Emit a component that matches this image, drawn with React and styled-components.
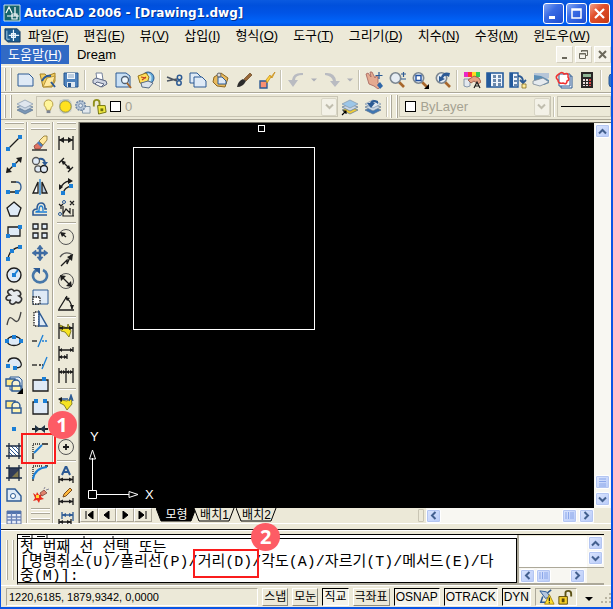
import React from "react";
import styled, { createGlobalStyle, css } from "styled-components";

const GlobalStyle = createGlobalStyle`
  * { box-sizing: border-box; }
  body {
    margin: 0;
    font-family: "Liberation Sans", "Noto Sans CJK KR", sans-serif;
    font-size: 13px;
    color: #000;
  }
  button, select {
    font: inherit;
    color: inherit;
    margin: 0;
    padding: 0;
    border: 0;
    background: none;
  }
`;

const INK = "#1c1c1c";
const BLUE = "#1b7fd6";
const NAVY = "#2c5a94";
const PALE = "#dfeaf6";

const Window = styled.div`
  display: flex;
  flex-direction: column;
  height: 100vh;
  background: #ece9d8;
  border: solid #0a55e5;
  border-width: 0 2px 2px 1px;
  overflow: hidden;
`;

const TitleBar = styled.header`
  display: flex;
  align-items: center;
  flex: none;
  height: 26px;
  padding: 0 1px 0 2px;
  background: linear-gradient(#0a5ae0, #0050dc 20%, #0054e6 50%, #0064fa 85%, #0052e0);
`;

const Title = styled.h1`
  flex: 1;
  margin: 0 0 0 3px;
  font-family: "DejaVu Sans", sans-serif;
  font-size: 12px;
  line-height: 24px;
  font-weight: bold;
  color: #fff;
  text-shadow: 1px 1px #003090;
  white-space: nowrap;
`;

const CaptionButton = styled.button`
  width: 21px;
  height: 21px;
  margin-left: 2px;
  border: 1px solid #fff;
  border-radius: 3px;
  background: ${(p) =>
    p.$close
      ? "linear-gradient(135deg, #f0a088, #e2502c 40%, #c63a14)"
      : "linear-gradient(135deg, #86a8f4, #3a6ce4 40%, #1c4cd0)"};
  svg { display: block; margin: auto; }
`;

const Menus = styled.div`
  flex: none;
  margin-bottom: 2px;
`;

const MenuRow = styled.nav`
  display: flex;
  align-items: center;
  gap: 1px;
  height: 19px;
  line-height: 19px;
  white-space: nowrap;
`;

const MenuIcon = styled.span`
  width: 19px;
  height: 19px;
  padding-left: 3px;
`;

const MenuItem = styled.button`
  height: 19px;
  padding: 0 7px;
  line-height: 19px;
  ${(p) => p.$active && css`
    color: #fff;
    background: #316ac5;
  `}
`;

const ChildButtons = styled.div`
  display: flex;
  gap: 2px;
  margin-left: auto;
`;

const ChildButton = styled.button`
  width: 17px;
  height: 17px;
  background: #f5f3ea;
  border: 1px solid;
  border-color: #fff #d4d0c0 #d4d0c0 #fff;
  svg { display: block; margin: auto; }
`;

const ToolRow = styled.div`
  display: flex;
  align-items: center;
  flex: none;
  height: 27px;
  padding-left: 3px;
  border-top: 1px solid #fff;
  border-bottom: 1px solid #aca899;
  overflow: hidden;
`;

const Grip = styled.span`
  flex: none;
  ${(p) => p.$across ? css`
    width: 19px;
    height: 7px;
    margin: 1px auto 2px;
    border-top: 1px solid #aca899;
    border-bottom: 1px solid #aca899;
    box-shadow: 0 -1px #fff, inset 0 2px #ece9d8, inset 0 -1px #fff;
  ` : css`
    width: 7px;
    height: ${p.$tall ? "40px" : "23px"};
    margin: 0 1px 0 1px;
    border-left: 1px solid #aca899;
    border-right: 1px solid #aca899;
    box-shadow: -1px 0 #fff, inset 2px 0 #ece9d8, inset -1px 0 #fff;
  `}
`;

const ToolButton = styled.button`
  position: relative;
  flex: none;
  display: flex;
  align-items: center;
  justify-content: center;
  width: ${(p) => (p.$narrow ? "13px" : "23px")};
  height: 22px;
  svg { display: block; }
`;

const Divider = styled.span`
  flex: none;
  ${(p) => p.$across ? css`
    height: 2px;
    width: 19px;
    margin: 2px auto;
    border-top: 1px solid #aca899;
    border-bottom: 1px solid #fff;
  ` : css`
    width: 2px;
    height: 20px;
    margin: 0 2px;
    border-left: 1px solid #c5c2b2;
    border-right: 1px solid #fff;
  `}
`;

const Combo = styled.div`
  display: flex;
  align-items: center;
  height: 21px;
  flex: ${(p) => p.$basis};
  min-width: 0;
  padding-left: 3px;
  border: 1px solid #c9c5b4;
  color: #a5a292;
  overflow: hidden;
`;

const ComboIcon = styled.span`
  flex: none;
  width: 17px;
  height: 18px;
`;

const Swatch = styled.span`
  flex: none;
  width: 11px;
  height: 11px;
  margin: 0 4px 0 2px;
  border: 1px solid #000;
  background: #fff;
`;

const Select = styled.select`
  appearance: none;
  flex: 1;
  min-width: 0;
  height: 18px;
  line-height: 18px;
  outline: 0;
`;

const Arrow = styled.span`
  flex: none;
  display: flex;
  align-items: center;
  justify-content: center;
  width: 16px;
  height: 18px;
  border: 1px solid #d8d5c5;
  border-radius: 2px;
  background: #f3f1e7;
`;

const LineSample = styled.span`
  flex: 1;
  border-top: 1px solid #000;
`;

const Main = styled.main`
  display: flex;
  flex: 1;
  min-height: 0;
  margin-top: 2px;
`;

const Tools = styled.div`
  display: flex;
  flex: none;
  overflow: hidden;
`;

const ToolColumn = styled.div`
  display: flex;
  flex-direction: column;
  align-items: center;
  width: 26px;
  padding-left: 1px;
  border-right: 1px solid #aca899;
  box-shadow: 1px 0 #fff;
`;

const Workspace = styled.section`
  display: flex;
  flex-direction: column;
  flex: 1;
  min-width: 0;
  border-left: 1px solid #716f64;
  border-top: 1px solid #716f64;
`;

const View = styled.div`
  display: flex;
  flex: 1;
  min-height: 0;
`;

const Canvas = styled.div`
  position: relative;
  flex: 1;
  background: #000;
  overflow: hidden;
`;

const Square = styled.div`
  position: absolute;
  left: 53px;
  top: 24px;
  width: 182px;
  height: 183px;
  border: 1px solid #fff;
`;

const PickBox = styled.div`
  position: absolute;
  left: 178px;
  top: 2px;
  width: 7px;
  height: 7px;
  border: 1px solid #fff;
`;

const Ucs = styled.svg`
  position: absolute;
  left: 4px;
  bottom: 4px;
`;

const Scroll = styled.div`
  display: flex;
  flex-direction: ${(p) => (p.$vertical ? "column" : "row")};
  align-items: center;
  flex: none;
  width: ${(p) => (p.$vertical ? "17px" : p.$width)};
  ${(p) => !p.$vertical && "height: 15px;"}
  background: #f8f7f2;
`;

const ScrollButton = styled.button`
  flex: none;
  display: flex;
  align-items: center;
  justify-content: center;
  width: 15px;
  height: 14px;
  margin: ${(p) => p.$margin || "0"};
  border: 1px solid #fff;
  border-radius: 2px;
  background: linear-gradient(135deg, #dbe5fe, #b8cbf8);
  box-shadow: inset 0 0 0 1px #b4c6f2;
`;

const SheetBar = styled.div`
  display: flex;
  align-items: flex-start;
  flex: none;
  height: 16px;
`;

const SheetNav = styled.button`
  display: flex;
  align-items: center;
  justify-content: center;
  width: 18px;
  height: 14px;
  border: 1px solid;
  border-color: #fff #aca899 #aca899 #fff;
`;

const SheetTabs = styled.div`
  display: flex;
  flex: 1;
  margin-left: 4px;
`;

const SheetTab = styled.button`
  position: relative;
  flex: none;
  width: 41px;
  height: 14px;
  line-height: 12px;
  font-size: 12px;
  margin-right: ${(p) => (p.$active ? "-3px" : "1px")};
  color: ${(p) => (p.$active ? "#fff" : "#000")};
  svg { position: absolute; left: 0; top: 0; }
  span { position: relative; }
`;

const Splitter = styled.span`
  width: 6px;
  height: 13px;
  margin: 1px 2px 0 0;
  border: 1px solid #c9c5b4;
  border-radius: 1px;
`;

const Dock = styled.section`
  flex: none;
  display: flex;
  align-items: center;
  margin-top: 5px;
  padding: 4px 7px 0 5px;
  border-top: 1px solid #1c1c1c;
  box-shadow: 0 -5px #ece9d8, 0 -6px #fff, inset 0 1px #fff;
`;

const CommandWindow = styled.div`
  display: flex;
  flex: 1;
  min-width: 0;
  margin-left: 2px;
  background: #ece9d8;
  border-top: 1px solid #000;
  border-left: 1px solid #000;
  border-bottom: 2px solid #aca899;
`;

const Log = styled.div`
  flex: 1;
  min-width: 0;
  font-family: "Liberation Mono", "Noto Sans CJK KR", monospace;
  font-size: 15px;
  background: #fff;
  border-right: 2px solid #aca899;
`;

const History = styled.svg`
  display: block;
  width: 100%;
  height: 3px;
`;

const Prompt = styled.div`
  height: 45px;
  padding: 3px 0 0 2px;
  border: solid #000;
  border-width: 1px 1px 1px 0;
  white-space: nowrap;
`;

const PromptLine = styled.p`
  display: flex;
  align-items: center;
  height: 14px;
  margin: 0;
  line-height: 14px;
`;

const LogSide = styled.div`
  display: flex;
  flex-direction: column;
  flex: none;
  width: 85px;
  padding-top: 1px;
`;

const LogBlank = styled.div`
  display: flex;
  justify-content: flex-end;
  flex: 1;
  background: #fff;
  border-bottom: 1px solid #aca899;
`;

const Marked = styled.span`
  position: relative;
`;

const RedBox = styled.span`
  position: absolute;
  z-index: 2;
  inset: ${(p) => p.$inset};
  border: 2px solid #fa1c1c;
`;

const Badge = styled.b`
  position: absolute;
  z-index: 3;
  top: ${(p) => p.$top};
  right: ${(p) => p.$right};
  width: 29px;
  height: 28px;
  border-radius: 50%;
  background: #fd5c65;
  color: #fff;
  font-family: "Noto Sans", sans-serif;
  font-size: 20px;
  line-height: 27px;
  text-align: center;
`;

const StatusBar = styled.footer`
  display: flex;
  align-items: center;
  flex: none;
  gap: 4px;
  height: 22px;
  padding-left: 5px;
  border-top: 1px solid #fff;
  font-size: 12px;
`;

const Coords = styled.output`
  flex: 1;
  min-width: 0;
  height: 18px;
  padding-left: 2px;
  line-height: 16px;
  font-size: 11px;
  border: 1px solid;
  border-color: #aca899 #fff #fff #aca899;
  white-space: nowrap;
`;

const StatusButton = styled.button`
  flex: none;
  height: 18px;
  padding: 0 1px;
  line-height: 16px;
  border: 1px solid;
  border-color: ${(p) => (p.$on ? "#000 #fff #fff #000" : "#fff #8c897c #8c897c #fff")};
  background: ${(p) => (p.$on ? "#f5f3ea" : "#ece9d8")};
`;

const Tray = styled.div`
  display: flex;
  flex: none;
  gap: 2px;
  height: 18px;
  padding: 0 2px;
  border: 1px solid;
  border-color: #aca899 #fff #fff #aca899;
`;

const StatusMenu = styled.button`
  width: 16px;
  height: 18px;
  svg { display: block; margin: 4px auto 0; }
`;

const Pt = ({ x, y }) => <rect x={x} y={y} width="4" height="4" fill={BLUE} />;
const Ln = ({ d, c = INK, w = 1.3, f = "none", ...rest }) => (
  <path d={d} stroke={c} strokeWidth={w} fill={f} {...rest} />
);
const Page = ({ x, y, w, h }) => (
  <path d={`M${x} ${y}h${w - 4}l4 4v${h - 4}h-${w}z`} fill={PALE} stroke={NAVY} />
);
const Lens = ({ children }) => (
  <>
    <Ln d="M11 11l5 5" c="#a8672c" w={2.6} />
    <circle cx="7.5" cy="7" r="5.2" fill="#e6edf4" stroke="#7c8791" strokeWidth="1.6" />
    {children}
  </>
);
const Stack = ({ a, b }) => (
  <>
    <path d="M1 12l8-3 8 3-8 4z" fill={b} stroke="#59728f" strokeWidth=".7" />
    <path d="M1 9l8-3 8 3-8 4z" fill="#cbd7e4" stroke="#59728f" strokeWidth=".7" />
    <path d="M1 6l8-4 8 4-8 4z" fill={a} stroke="#8195aa" strokeWidth=".7" />
  </>
);
const HatchFrame = () => <Ln d="M4 1v16M14 1v16M1 4h16M1 14h16" c="#1c2c44" w={1.3} />;
const Squares = () => (
  <>
    <path d="M1 3h9v7H1z" fill="#ffe98a" stroke={NAVY} strokeWidth="1.4" />
    <circle cx="11" cy="8" r="4" fill="#f7f3d4" stroke={NAVY} strokeWidth="1.4" />
    <path d="M7 10h9v5H7z" fill="#fff4b0" stroke={NAVY} strokeWidth="1.4" />
  </>
);

const icons = {
  // standard toolbar
  new: <Page x={2} y={3} w={15} h={12} />,
  open: (
    <>
      <path d="M1 3l5 0 2 2 8-3v8l-3 6H4z" fill="#f3cf62" stroke="#a58226" />
      <path d="M4 16l4-9 8-2-3 10z" fill="#ffe9a0" stroke="#b8963a" />
      <Ln d="M3 10q3-6 9-5M12 11l4 5" c={NAVY} w={2} />
    </>
  ),
  save: (
    <>
      <path d="M2 2h14v14H4l-2-2z" fill="#4f83bd" stroke="#25558e" />
      <path d="M5 2h8v6H5z" fill="#f2f6fa" />
      <Ln d="M6 4h6M6 6h6" c="#86a5c5" w={1} />
      <path d="M5 11h8v5H5z" fill="#dfe8f1" /><path d="M6 12h3v4H6z" fill="#25558e" />
    </>
  ),
  print: (
    <>
      <path d="M5 2h6l1 7H6z" fill="#fff" stroke="#75829b" />
      <path d="M2 9l3-2 10 3 1 3-5 3-9-4z" fill="#cfd5e2" stroke="#5d6883" />
      <path d="M6 11l7 2-3 3-6-3z" fill="#f4f6fa" stroke="#5d6883" />
    </>
  ),
  preview: (
    <>
      <path d="M2 2h10l4 3v11H2z" fill="#c9e0f5" stroke={NAVY} />
      <circle cx="11" cy="9" r="3.5" fill="#eef6fc" stroke="#4e6075" strokeWidth="1.3" />
      <Ln d="M13 12l4 5" c="#a8672c" w={2} />
    </>
  ),
  publish: (
    <>
      <circle cx="11" cy="7" r="6" fill="#62a8d4" stroke={NAVY} />
      <path d="M11 2q5 2 3 8l-4 2z" fill="#c9e4f2" />
      <path d="M1 5l8-3 3 4-2 7-7-1z" fill="#ffdf5b" stroke="#96741a" />
      <Ln d="M4 6l5 1M5 9l4-3" c="#c23c20" w={1.2} />
      <path d="M4 12l7-2 5 2-4 5-7-1z" fill="#dbe3ed" stroke="#586c86" />
    </>
  ),
  cut: (
    <>
      <Ln d="M1 6l10 4M1 10l10-2" c="#4b5563" w={1.6} />
      <circle cx="13.5" cy="6.5" r="2.2" fill="none" stroke={NAVY} strokeWidth="1.5" />
      <circle cx="13" cy="12" r="2.2" fill="none" stroke={NAVY} strokeWidth="1.5" />
    </>
  ),
  copy: <><Page x={1} y={2} w={11} h={10} /><Page x={5} y={6} w={12} h={10} /></>,
  paste: (
    <>
      <path d="M2 6l7-4 7 5-3 9-8-1-4-4z" fill="#e8b95c" stroke="#8d6822" />
      <Page x={6} y={6} w={8} h={7} />
      <circle cx="7" cy="4" r="2" fill="#ddd" stroke="#666" />
    </>
  ),
  brush: (
    <>
      <path d="M9 8l6-6 2 2-6 6z" fill="#996838" stroke="#553513" strokeWidth=".6" />
      <path d="M2 16q1-6 6-8l3 2q-3 6-9 6z" fill="#2b2b2b" />
    </>
  ),
  blockEdit: (
    <>
      <path d="M2 10h7v7H2z" fill="#fa8f72" stroke={NAVY} strokeWidth="1.4" />
      <path d="M8 9l4-5 1 2 4-5-3 6-1-1-4 6z" fill="#ffd43a" stroke="#c4891c" strokeWidth=".8" />
    </>
  ),
  pan: (
    <>
      <path d="M1 3l2-1 3 4-1-5 2 0 3 6 1-2 2 1v6l3 3-3 3-4-3-5-2z" fill="#e4aa90" stroke="#a3615a" strokeWidth=".8" />
      <path d="M12 14l3-3 3 4-3 3z" fill="#2f67a8" />
      <Ln d="M14 1v7M10.500 4.500h7" c={NAVY} w={1.2} />
    </>
  ),
  zoomRt: <Lens><Ln d="M13 3h5M15.500 1v5M13 8h5" c={NAVY} w={1.2} /></Lens>,
  zoomWin: (
    <Lens>
      <path d="M5 4.500h5v5H5z" fill="#fff" stroke="#1f4fa0" strokeWidth="1.4" />
      <path d="M18 13v5h-5z" fill="#000" />
    </Lens>
  ),
  zoomPrev: <Lens><path d="M16 2q-7-2-9 4l-2-1 0 6 6-3-2-1q2-4 6-1z" fill={NAVY} /></Lens>,
  props: (
    <>
      <path d="M1 1h4v5H1z" fill="#e928c6" /><path d="M5 1h4v5H5z" fill="#f33" />
      <path d="M9 1h4v5H9z" fill="#fd2" /><path d="M13 1h4v5h-4z" fill="#3c5" />
      <path d="M1 8h6v7q-3 2-6 0z" fill="#e3e8ee" stroke="#70839a" strokeWidth=".8" />
      <path d="M5 9l6-4 5 2 2 4-3 2-4-3-3 2z" fill="#e4a183" stroke="#914c3c" strokeWidth=".8" />
      <Ln d="M11 17l3-6 3 6M12 15h4" w={1.2} />
    </>
  ),
  designCenter: (
    <>
      <path d="M1 2h16v14H1z" fill="#eef4fb" stroke="#235a9c" strokeWidth="1.6" />
      <path d="M1 2h4v14H1z" fill="#235a9c" />
      <path d="M7 4h3v3H7zM12 4h3v3h-3zM7 8h3v3H7zM12 8h3v3h-3zM7 12h3v3H7zM12 12h3v3h-3z" fill="#6a88ab" />
    </>
  ),
  toolPalette: (
    <>
      <path d="M1 2h8v14H1z" fill="#eef4fb" stroke="#235a9c" strokeWidth="1.4" />
      <path d="M1 2h3v14H1z" fill="#235a9c" />
      <path d="M5 5h3v2H5zM5 9h3v2H5zM5 13h3v2H5z" fill="#6a88ab" />
      <Ln d="M9 5q5 0 5 6M11 9l3 3 3-3" c={NAVY} w={1.8} />
      <path d="M13 13h4v4h-4z" fill="#ffec9c" stroke="#876d21" strokeWidth=".8" />
    </>
  ),
  sheetSet: (
    <>
      <path d="M2 2h15v5l-8 4-7-2z" fill="#b6c6d8" />
      <path d="M2 4l7 1 8 4v3l-5 2-10-5z" fill="#5c8fb6" />
      <path d="M1 10l10-3 6 4-9 4-7-2z" fill="#e6ebef" stroke="#778795" strokeWidth=".8" />
    </>
  ),
  markup: (
    <>
      <path d="M6 5h11v12H6z" fill="#eef2f8" stroke={NAVY} />
      <path d="M4 3h11v12H4z" fill="#fff" stroke={NAVY} />
      <Ln d="M4 3q3-3 5 0 5-2 4 3 2 3-1 4 0 4-4 2-5 1-5-3-4-3 1-6z" c="#f03232" w={1.6} />
    </>
  ),
  calc: (
    <>
      <path d="M3 1h12v16H3z" fill="#292626" />
      <path d="M5 3h8v3H5z" fill="#8fb594" />
      <path d="M5 8h2v2H5zM8 8h2v2H8zM5 11h2v2H5zM8 11h2v2H8zM5 14h2v1H5zM8 14h2v1H8z" fill="#e8dcdc" />
      <path d="M11 8h2v2h-2zM11 11h2v2h-2zM11 14h2v1h-2z" fill="#e04848" />
    </>
  ),
  help: <rect x="2" y="3" width="14" height="13" rx="3" fill="#3472c4" stroke={NAVY} />,
  redo: <path d="M2 2q10-1 11 8h4l-5 6-5-6h3Q9 5 2 4z" fill="#b9bbc1" />,
  back: <path d="M16 2Q6 1 5 9H1l5 7 5-7H8q0-5 8-5z" fill="#b9bbc1" />,
  // layers
  layers: <Stack a="#dfe6ee" b="#7b98b8" />,
  layerCurrent: (
    <><Stack a="#9cc6e8" b="#f0cc38" /><Ln d="M1 17l4-4M2 13h3v3" c="#000" w={1.1} /></>
  ),
  layerPrev: <><Stack a="#dfe6ee" b="#3f77b4" /><path d="M14 3Q8 0 6 5H3l4 5 4-5H9q2-2 5 1z" fill={NAVY} /></>,
  bulb: (
    <>
      <path d="M9 2a4.500 4.500 0 0 1 3 8l-1 3H7l-1-3a4.500 4.500 0 0 1 3-8z" fill="#fff59a" stroke="#b59b42" />
      <path d="M7 13h4v3H7z" fill="#7d8492" />
    </>
  ),
  sun: (
    <>
      <path d="M3 2h2l2-1h5l3 3 1 5-1 5-3 2-5 1-4-3-1-5z" fill="#b0bcc0" opacity=".7" />
      <circle cx="9" cy="9" r="6" fill="#ffe21f" stroke="#94904a" />
    </>
  ),
  freeze: (
    <>
      <path d="M9 9h8v7H9z" fill="#e3e9ee" stroke="#8195a5" />
      <circle cx="7" cy="8" r="5" fill="#b5c5d6" stroke="#7188a5" strokeWidth="1.6" strokeDasharray="2 1" />
      <circle cx="7" cy="8" r="2" fill="#e4ebf2" stroke="#7188a5" />
    </>
  ),
  lock: (
    <>
      <Ln d="M3 9V5q0-3 3-3t3 3v5" c="#90901c" w={2} />
      <path d="M7 8h8l1 7-8 2z" fill="#f0e840" stroke="#6f7010" />
      <path d="M10 11h3v3h-3z" fill="#6f7010" />
    </>
  ),
  // draw
  line: <><Ln d="M3 15L15 3" /><Pt x={1} y={13} /><Pt x={13} y={1} /></>,
  xline: (
    <>
      <Ln d="M2 16L16 2" />
      <path d="M1 17l1-6 5 5zM17 1l-6 1 5 5z" fill={INK} />
      <Pt x={7} y={7} />
    </>
  ),
  pline: (
    <>
      <Ln d="M6 4h5M4 14h7" /><Ln d="M11 4q5 0 5 5t-5 5" c={NAVY} />
      <Pt x={1} y={12} /><Pt x={10} y={12} />
    </>
  ),
  polygon: <Ln d="M9 2l7 6-3 8H5L2 8z" f={PALE} />,
  rect: <><Ln d="M3 5h12v9H3z" f={PALE} /><Pt x={1} y={12} /><Pt x={13} y={3} /></>,
  arc: <><Ln d="M3 15Q4 5 15 3" /><Pt x={1} y={13} /><Pt x={5} y={5} /><Pt x={13} y={1} /></>,
  circle: (
    <><circle cx="9" cy="9" r="7" fill={PALE} stroke={INK} strokeWidth="1.4" /><Ln d="M9 9l4-5" c={BLUE} w={2} /><Pt x={7} y={7} /></>
  ),
  cloud: (
    <Ln d="M5 7Q1 4 4 2q3-2 5 1 4-2 6 1 2 3-1 4 4 2 2 5-2 3-5 1-3 4-6 1-1-2 1-3-5 1-5-2 1-3 4-3z" f="#e6eaee" c="#333" w={1.6} />
  ),
  spline: <Ln d="M2 15C4 5 6 7 9 10s5 2 7-8" c="#444" />,
  ellipse: (
    <><ellipse cx="9" cy="9" rx="7" ry="4.500" fill={PALE} stroke={INK} strokeWidth="1.3" /><Pt x={0} y={7} /><Pt x={7} y={3} /><Pt x={14} y={7} /></>
  ),
  ellipseArc: (
    <><Ln d="M3 8q1-4 6-4t7 5-6 5" f={PALE} /><Pt x={1} y={10} /><Pt x={8} y={12} /></>
  ),
  insert: <><path d="M5 1h9l3 3v10H5z" fill={PALE} stroke={NAVY} /><Squares /><path d="M18 12v6h-6z" /></>,
  block: <Squares />,
  point: <Pt x={7} y={7} />,
  hatch: (
    <><path d="M4 4h10v10H4z" fill="#fff" /><Ln d="M4 10l4 4M4 6l8 8M6 4l8 8M10 4l4 4" c={NAVY} w={1} /><HatchFrame /></>
  ),
  gradient: (
    <><path d="M4 4h10v10H4z" fill="#303c58" /><path d="M14 6v8H6z" fill="#80784c" /><HatchFrame /></>
  ),
  region: (
    <><path d="M2 3h8l6 7v5H2z" fill={PALE} stroke={NAVY} strokeWidth="1.4" /><circle cx="8" cy="10" r="2.500" fill="#fff" stroke={NAVY} /></>
  ),
  table: (
    <>
      <path d="M2 3h14v13H2z" fill="#e8eefa" stroke="#6276a4" />
      <path d="M2 3h14v3H2z" fill="#5274ae" />
      <Ln d="M2 9h14M2 12h14M6.500 5v11M11.500 5v11" c="#6a83b8" />
    </>
  ),
  // modify
  erase: (
    <>
      <path d="M3 12l5-4 4 3-3 4H4z" fill="#e07564" stroke="#8c3c34" strokeWidth=".8" />
      <path d="M6 9l2-2 4 4-2 2z" fill="#4b7fbe" />
      <path d="M8 7l5-5h3v4l-4 5z" fill="#ffe89c" stroke="#8a7128" strokeWidth=".8" />
      <Ln d="M1 16h15" />
    </>
  ),
  copyObj: (
    <>
      <circle cx="5" cy="5" r="3.500" fill={PALE} stroke="#555" strokeWidth="1.3" />
      <circle cx="7" cy="13" r="3.200" fill={PALE} stroke="#555" strokeWidth="1.3" />
      <circle cx="13" cy="13" r="3.500" fill={PALE} stroke={INK} strokeWidth="1.3" />
      <Ln d="M8 3q5-1 6 4" c={NAVY} w={2} /><path d="M11 6h6l-3 4z" fill={NAVY} />
    </>
  ),
  mirror: <><Ln d="M7 4v11H2z" f="#fff" /><Ln d="M11 4v11h5z" f="#b9cbdc" /><Ln d="M9 1v16" c={BLUE} /></>,
  offset: (
    <>
      <Ln d="M16 15H2v-4q1-2 4-2 0-6 4-6t4 5v1h2" c={NAVY} w={1.6} />
      <Ln d="M16 12H6h-1q0-1 3-1 0-5 2-5t2 4v1" c={BLUE} />
    </>
  ),
  array: <Ln d="M2 2h5v5H2zM11 2h5v5h-5zM2 11h5v5H2zM11 11h5v5h-5z" f={PALE} />,
  move: (
    <path d="M9 1l3 4h-2v3h3V6l4 3-4 3v-2h-3v3h2l-3 4-3-4h2v-3H5v2L1 9l4-3v2h3V5H6z" fill="#3f6ea5" stroke={NAVY} strokeWidth=".5" />
  ),
  rotate: <><Ln d="M6 4a7 6.500 0 1 0 6 0" c="#4677a9" w={2.6} /><path d="M2 2h7v6z" fill={NAVY} /></>,
  scale: (
    <><path d="M2 2h15v14H2z" fill={PALE} stroke={NAVY} /><Ln d="M2 9h7v7H2z" f="#fff" strokeDasharray="1.500 1" /></>
  ),
  stretch: (
    <><Ln d="M8 2h-5v14h5z" f="#fff" strokeDasharray="1.500 1" /><path d="M8 2l8 14H8z" fill={PALE} stroke={NAVY} strokeWidth="1.5" /></>
  ),
  trim: <><Ln d="M1 9h5" /><Ln d="M7 15l5-12" c={BLUE} /><Ln d="M11 9h6" c={BLUE} strokeDasharray="2 1" /></>,
  extend: <><Ln d="M1 11h5" /><Ln d="M8 11h4" c={INK} strokeDasharray="2 1" /><Ln d="M11 15l5-12" c={BLUE} /></>,
  breakPt: <><Ln d="M2 4h15v11H2z" f={PALE} /><Pt x={11} y={1} /></>,
  break: <><Ln d="M5 4H2v12h15V4h-3" f={PALE} /><Pt x={3} y={1} /><Pt x={12} y={1} /></>,
  join: <><Ln d="M1 9h16" w={2} /><path d="M4 5l5 4-5 4zM14 5l-5 4 5 4z" fill="#234" /></>,
  chamfer: <><Ln d="M2 17v-6M11 2h6" /><Ln d="M2 10V2h8" strokeDasharray="1 1" /><Ln d="M3 11l8-8" c={BLUE} w={1.8} /></>,
  fillet: <><Ln d="M2 17v-4M14 2h3" /><Ln d="M2 12V2h9" strokeDasharray="1 1" /><Ln d="M2 15Q4 4 16 3" c={BLUE} w={2} /></>,
  explode: (
    <>
      <path d="M2 7l3 2 1-3 2 3 3-1-1 3 3 2-4 1-1 3-2-3-4 1 2-3z" fill="#e92c1c" />
      <path d="M5 9h3v3H5z" fill="#ffd83a" />
      <path d="M9 7l4-3 3 3-5 3z" fill="#e0826c" stroke="#6e3830" strokeWidth=".7" />
      <Ln d="M13 3l1-2M15 4l3-1" c="#889" w={1} />
    </>
  ),
  // dimension
  dimLinear: <><Ln d="M2 2v14M16 2v14M2 6h14" /><path d="M2 6l5-3v6zM16 6l-5-3v6z" fill={INK} /></>,
  dimAligned: <><Ln d="M2 7l5-5M11 16l5-5M5 5l8 8" /><path d="M4 4l5 2-3 3zM14 14l-5-2 3-3z" fill={INK} /></>,
  dimArc: (
    <><Ln d="M6 16Q7 9 15 8M3 11Q6 4 12 3" /><path d="M2 12V6l4 3zM11 0l5 3-5 3z" fill={INK} /><Pt x={4} y={13} /><Pt x={12} y={6} /></>
  ),
  ordinate: (
    <>
      <Ln d="M6 6v10h11M6 14l3-5 4 4V8M2 4l2 2 2-2M4 6v3M13 1l4 4M17 1l-4 4M16 9v7" w={1.2} />
      <circle cx="3" cy="14" r="1.500" fill="none" stroke={NAVY} /><circle cx="7" cy="2" r="1.500" fill="none" stroke={NAVY} />
    </>
  ),
  radius: <><circle cx="9" cy="9" r="7.500" fill="none" stroke="#555" /><Ln d="M9 9L4 5" /><path d="M3 4l6 1-4 4z" fill={INK} /></>,
  jogged: <><Ln d="M3 7Q8 0 16 5" c="#555" /><Ln d="M4 16l6-6 0 4 4-9" /><path d="M16 4l-6 3 5 4z" fill={INK} /></>,
  diameter: <><circle cx="9" cy="9" r="7.500" fill="none" stroke="#555" /><Ln d="M4 4l10 10" /><path d="M3 3l6 1-5 5zM15 15l-6-1 5-5z" fill={INK} /></>,
  angular: <><Ln d="M1 16h16M2 15L10 2M9 4q6 4 6 11" /><path d="M8 3l5 1-3 3zM15 16l-2-5h4z" fill={INK} /></>,
  quick: (
    <>
      <path d="M3 3l7 3 1-4 3 7-2 6-4-5-4-1z" fill="#f7e321" stroke="#6d6913" strokeWidth=".8" />
      <Ln d="M2 1v16M16 1v16M2 6h14" /><path d="M2 6l4-2v4zM16 6l-4-2v4z" fill={INK} />
    </>
  ),
  baseline: <><Ln d="M2 2v15M2 6h14M16 3v5M2 13h8M10 10v5" /><path d="M2 6l3-2v4zM16 6l-3-2v4zM2 13l3-2v4zM10 13l-3-2v4z" fill={INK} /></>,
  continue: <><Ln d="M2 2v15M9 2v15M16 2v15M2 6h14" /><path d="M2 6l3-2v4zM9 6L6 4v4zM9 6l3-2v4zM16 6l-3-2v4z" fill={INK} /></>,
  leader: (
    <>
      <path d="M4 6l6 1 4-3 1 6-5 6-3-5-4-2z" fill="#f7e321" stroke="#6d6913" strokeWidth=".8" />
      <Ln d="M2 5h9M12 7l2-6 2 6M13 5h3" c={NAVY} /><path d="M1 5l4-2v5z" fill={INK} />
    </>
  ),
  tolerance: <Ln d="M1 5h16v8H1zM7 5v8M12 5v8" f="#fff" />,
  centerMark: <><circle cx="9" cy="9" r="7.500" fill="none" stroke="#555" /><Ln d="M9 6v6M6 9h6" w={1.8} /></>,
  dimEdit: (
    <><Ln d="M5 9L9 0l4 9M6.500 6h5" c={NAVY} w={2} /><Ln d="M2 10v7M16 10v7M2 13.500h14" /><path d="M2 13.500l4-2v4zM16 13.500l-4-2v4z" fill={INK} /></>
  ),
  dimTextEdit: (
    <><path d="M6 9l1-3 6-6 2 2-6 6z" fill="#ffb93c" stroke="#7b4c1c" /><Ln d="M2 10v7M16 10v7M2 13.500h14" /><path d="M2 13.500l4-2v4zM16 13.500l-4-2v4z" fill={INK} /></>
  ),
  dimUpdate: <><Ln d="M5 2v7M16 2v9M5 5h11" c={NAVY} /><path d="M5 5l4-2v4zM16 5l-4-2v4z" fill={NAVY} /><Ln d="M2 9v8M14 9v8M2 12h12" /><path d="M2 12l4-2v4zM14 12l-4-2v4z" fill={INK} /></>,
  // application
  app: (
    <>
      <path d="M1 1h16v16H1z" fill="#16646b" stroke="#d2e6e6" />
      <Ln d="M3 9l3-6 3 6M12 3v9M4 12h12M9 10h5v5H9z" c="#fff" w={1.2} />
    </>
  ),
  doc: (
    <>
      <path d="M1 3h13l3 3v11H4l-3-3z" fill="#1d5d91" stroke="#173c62" />
      <path d="M3 5v9h3" fill="none" stroke="#a9cfe8" />
      <Ln d="M10 4v12M5 10h11M8 8h4v4H8z" c="#e9f5fc" w={1.3} />
    </>
  ),
  comms: (
    <>
      <path d="M2 2l7 1 4 5-5 2z" fill="#b4c6de" stroke={NAVY} />
      <Ln d="M5 8l-2 6h7M10 4l4-3" c={NAVY} w={1.6} />
      <path d="M12 6l5 10H7z" fill="#ffde2d" stroke="#a78715" /><Ln d="M12 9v4M12 14v1" />
    </>
  ),
  unlocked: (
    <>
      <Ln d="M9 9V4q0-2 3-2t3 3v3" c="#5c5216" w={2} />
      <path d="M2 8h9v8H2z" fill="#f5cf2a" stroke="#5c4a08" /><path d="M5 10h3v4H5z" fill="#5c4a08" />
    </>
  ),
};

const Icon = ({ name, size = 18 }) => (
  <svg width={size} height={size} viewBox="0 0 18 18" aria-hidden="true">{icons[name]}</svg>
);

const Caret = ({ color = "#000", size = 8 }) => (
  <svg width={size} height={size} viewBox="0 0 8 8" aria-hidden="true">
    <path d="M0 2h8L4 6z" fill={color} />
  </svg>
);

const turns = { up: 0, right: 90, down: 180, left: 270 };
const Chevron = ({ dir, color = "#43608f" }) => (
  <svg width="9" height="9" viewBox="0 0 9 9" aria-hidden="true">
    <path d="M1 6.500l3.500-3.500L8 6.500" transform={`rotate(${turns[dir]} 4.500 4.500)`} fill="none" stroke={color} strokeWidth="2" />
  </svg>
);

const Thumb = ({ vertical }) => (
  <svg width="9" height="9" viewBox="0 0 9 9" aria-hidden="true">
    <path d={vertical ? "M1 1h7M1 3.500h7M1 6h7M1 8h7" : "M1 1v7M3.500 1v7M6 1v7M8 1v7"} stroke="#8ba7ea" />
  </svg>
);

const menus = [
  ["파일", "F"], ["편집", "E"], ["뷰", "V"], ["삽입", "I"], ["형식", "O"],
  ["도구", "T"], ["그리기", "D"], ["치수", "N"], ["수정", "M"], ["윈도우", "W"],
];

const standard = [
  "new", "open", "save", "|", "print", "preview", "publish", "|",
  "cut", "copy", "paste", "brush", "blockEdit", "|",
  "back", "v", "redo", "v", "|",
  "pan", "zoomRt", "zoomWin", "zoomPrev", "|",
  "props", "designCenter", "toolPalette", "sheetSet", "markup", "calc", "|", "help",
];

const draw = [
  "line", "xline", "pline", "polygon", "rect", "arc", "circle", "cloud", "spline",
  "ellipse", "ellipseArc", "insert", "block", "point", "hatch", "gradient", "region", "table",
];

const modify = [
  "erase", "copyObj", "mirror", "offset", "array", "move", "rotate", "scale", "stretch",
  "trim", "extend", "breakPt", "break", "join", "chamfer", "fillet", "explode", "|", "=",
];

const dimension = [
  "dimLinear", "dimAligned", "dimArc", "ordinate", "|",
  "radius", "jogged", "diameter", "angular", "|",
  "quick", "baseline", "continue", "|",
  "leader", "tolerance", "centerMark", "|",
  "dimEdit", "dimTextEdit", "dimUpdate",
];

const status = [
  ["스냅", false], ["모눈", false], ["직교", true], ["극좌표", false],
  ["OSNAP", true], ["OTRACK", true], ["DYN", true],
];

function Column({ tools }) {
  return (
    <ToolColumn>
      <Grip $across />
      {tools.map((name, i) => {
        if (name === "|") return <Divider $across key={i} />;
        if (name === "=") return <Grip $across key={i} />;
        return (
          <ToolButton key={i} aria-label={name}>
            <Icon name={name} />
            {name === "chamfer" && (
              <>
                <RedBox $inset="-7px -4px -2px -8px" />
                <Badge $top="-29px" $right="-25px">1</Badge>
              </>
            )}
          </ToolButton>
        );
      })}
    </ToolColumn>
  );
}

function StandardBar() {
  return (
    <ToolRow>
      <Grip />
      {standard.map((name, i) => {
        if (name === "|") return <Divider key={i} />;
        if (name === "v") {
          return <ToolButton $narrow key={i} aria-label="list"><Caret color="#aeb0b8" size={6} /></ToolButton>;
        }
        return <ToolButton key={i} aria-label={name}><Icon name={name} /></ToolButton>;
      })}
    </ToolRow>
  );
}

function LayerBar() {
  return (
    <ToolRow>
      <Grip />
      <ToolButton aria-label="layers"><Icon name="layers" /></ToolButton>
      <Combo $basis="300 1 300px">
        {["bulb", "sun", "freeze", "lock"].map((n) => (
          <ComboIcon key={n}><Icon name={n} size={17} /></ComboIcon>
        ))}
        <Swatch />
        <Select aria-label="layer"><option>0</option></Select>
        <Arrow><Chevron dir="down" color="#c0bdae" /></Arrow>
      </Combo>
      <ToolButton aria-label="make current"><Icon name="layerCurrent" /></ToolButton>
      <ToolButton aria-label="previous layer"><Icon name="layerPrev" /></ToolButton>
      <Divider />
      <Grip />
      <Combo $basis="150 1 150px">
        <Swatch />
        <Select aria-label="color"><option>ByLayer</option></Select>
        <Arrow><Chevron dir="down" color="#c0bdae" /></Arrow>
      </Combo>
      <Divider />
      <Combo $basis="54 1 54px"><LineSample /></Combo>
    </ToolRow>
  );
}

function Sheet({ label, active }) {
  return (
    <SheetTab $active={active}>
      <svg width="41" height="14" viewBox="0 0 41 14" aria-hidden="true">
        <path d="M0 0l5 13h30l5-13" fill={active ? "#000" : "#ece9d8"} stroke="#000" />
      </svg>
      <span>{label}</span>
    </SheetTab>
  );
}

function Drawing() {
  return (
    <Workspace>
      <View>
        <Canvas>
          <PickBox />
          <Square />
          <Ucs width="76" height="80" viewBox="0 0 76 80" fill="none" stroke="#fff">
            <path d="M4.500 66.500h8v8h-8zM8.500 66V34M13 70.500h32" />
            <path d="M8.500 26l3 9h-6zM54 70.500l-9 3v-6z" />
            <text x="6" y="17" fill="#fff" stroke="none" fontSize="13">Y</text>
            <text x="61" y="75" fill="#fff" stroke="none" fontSize="13">X</text>
          </Ucs>
        </Canvas>
        <Scroll $vertical>
          <ScrollButton $margin="1px 0 auto" aria-label="up"><Chevron dir="up" /></ScrollButton>
          <ScrollButton $margin="0 0 3px" aria-label="thumb"><Thumb vertical /></ScrollButton>
          <ScrollButton $margin="0 0 2px" aria-label="down"><Chevron dir="down" /></ScrollButton>
        </Scroll>
      </View>
      <SheetBar>
        {["M2 0v8M9 0v8L4 4z", "M7 0v8L2 4z", "M3 0v8l5-4z", "M1 0v8l5-4zM8 0v8"].map((d) => (
          <SheetNav key={d} aria-label="sheet">
            <svg width="10" height="8" viewBox="0 0 10 8"><path d={d} stroke="#000" /></svg>
          </SheetNav>
        ))}
        <SheetTabs>
          <Sheet label="모형" active />
          <Sheet label="배치1" />
          <Sheet label="배치2" />
        </SheetTabs>
        <Splitter />
        <Scroll $width="168px">
          <ScrollButton aria-label="left"><Chevron dir="left" /></ScrollButton>
          <ScrollButton $margin="0 2px 0 auto" aria-label="thumb"><Thumb /></ScrollButton>
          <ScrollButton aria-label="right"><Chevron dir="right" /></ScrollButton>
        </Scroll>
        <Scroll $vertical />
      </SheetBar>
    </Workspace>
  );
}

function CommandLine() {
  return (
    <Dock>
      <Grip $tall />
      <CommandWindow>
        <Log>
          <History aria-hidden="true">
            <path d="M4 1.500h8M14 0v3M19 1.500h8M29 0v3M66 1v2M95 1v2" stroke="#000" />
          </History>
          <Prompt>
            <PromptLine>첫 번째 선 선택 또는</PromptLine>
            <PromptLine>
              [명령취소(U)/폴리선(P)/
              <Marked>
                거리(D)
                <RedBox $inset="-7px -7px -8px -5px" />
                <Badge $top="-33px" $right="-28px">2</Badge>
              </Marked>
              /각도(A)/자르기(T)/메서드(E)/다
            </PromptLine>
            <PromptLine>중(M)]:</PromptLine>
          </Prompt>
        </Log>
        <LogSide>
          <LogBlank>
            <Scroll $vertical>
              <ScrollButton aria-label="up"><Chevron dir="up" /></ScrollButton>
              <ScrollButton $margin="1px 0 0" aria-label="down"><Chevron dir="down" /></ScrollButton>
            </Scroll>
          </LogBlank>
          <Scroll $width="68px">
            <ScrollButton $margin="0 1px" aria-label="left"><Chevron dir="left" /></ScrollButton>
            <ScrollButton aria-label="thumb"><Thumb /></ScrollButton>
            <ScrollButton $margin="0 2px 0 auto" aria-label="right"><Chevron dir="right" /></ScrollButton>
          </Scroll>
        </LogSide>
      </CommandWindow>
    </Dock>
  );
}

function App() {
  return (
    <>
      <GlobalStyle />
      <Window>
        <TitleBar>
          <Icon name="app" />
          <Title>AutoCAD 2006 - [Drawing1.dwg]</Title>
          <CaptionButton aria-label="minimize">
            <svg width="13" height="13"><path d="M2 9h6v3H2z" fill="#fff" /></svg>
          </CaptionButton>
          <CaptionButton aria-label="maximize">
            <svg width="13" height="13"><path d="M2 2h9v9H2zM2 3h9" fill="none" stroke="#fff" strokeWidth="1.500" /></svg>
          </CaptionButton>
          <CaptionButton $close aria-label="close">
            <svg width="13" height="13"><path d="M2 2l9 9M11 2l-9 9" stroke="#fff" strokeWidth="2.200" /></svg>
          </CaptionButton>
        </TitleBar>
        <Menus>
          <MenuRow>
            <MenuIcon><Icon name="doc" size={17} /></MenuIcon>
            {menus.map(([label, key]) => (
              <MenuItem key={key}>{label}(<u>{key}</u>)</MenuItem>
            ))}
          </MenuRow>
          <MenuRow>
            <MenuItem $active>도움말(<u>H</u>)</MenuItem>
            <MenuItem>Dre<u>a</u>m</MenuItem>
            <ChildButtons>
              <ChildButton aria-label="minimize drawing">
                <svg width="11" height="11"><path d="M3 8h5v2H3z" fill="#6b685c" /></svg>
              </ChildButton>
              <ChildButton aria-label="restore drawing">
                <svg width="11" height="11"><path d="M3.500 3V1.500h6v5H8M1.500 4.500h6v5h-6zM1 5h7M3 2h7" fill="none" stroke="#6b685c" /></svg>
              </ChildButton>
              <ChildButton aria-label="close drawing">
                <svg width="11" height="11"><path d="M2 2l7 7M9 2L2 9" stroke="#6b685c" strokeWidth="2" /></svg>
              </ChildButton>
            </ChildButtons>
          </MenuRow>
        </Menus>
        <StandardBar />
        <LayerBar />
        <Main>
          <Tools>
            <Column tools={draw} />
            <Column tools={modify} />
            <Column tools={dimension} />
          </Tools>
          <Drawing />
        </Main>
        <CommandLine />
        <StatusBar>
          <Coords>1220,6185, 1879,9342, 0,0000</Coords>
          {status.map(([label, on]) => (
            <StatusButton key={label} $on={on}>{label}</StatusButton>
          ))}
          <Tray><Icon name="comms" size={17} /><Icon name="unlocked" size={17} /></Tray>
          <StatusMenu aria-label="status menu"><Caret /></StatusMenu>
          <svg width="10" height="14" viewBox="0 0 10 14" aria-hidden="true">
            <path d="M8 3h2v2H8zM4 7h2v2H4zM8 7h2v2H8zM0 11h2v2H0zM4 11h2v2H4zM8 11h2v2H8z" fill="#b8b4a2" />
          </svg>
        </StatusBar>
      </Window>
    </>
  );
}

export default App;
